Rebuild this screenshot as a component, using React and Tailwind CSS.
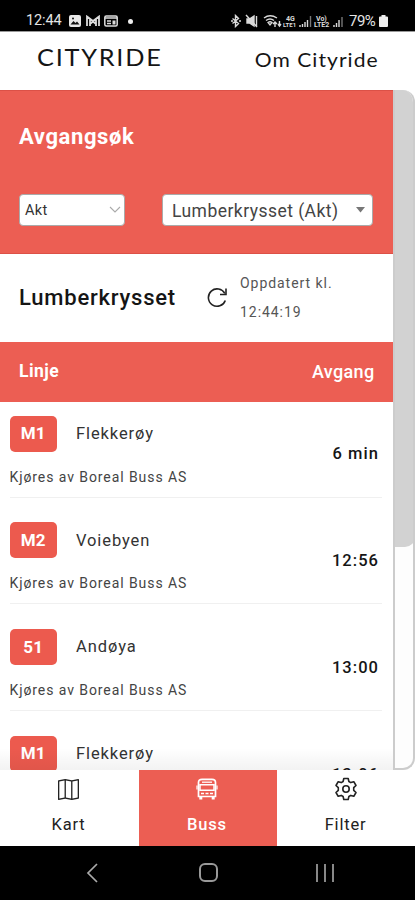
import React from "react";
import { BsMap } from "react-icons/bs";

const departures = [
  { line: "M1", to: "Flekkerøy", time: "6 min" },
  { line: "M2", to: "Voiebyen", time: "12:56" },
  { line: "51", to: "Andøya", time: "13:00" },
  { line: "M1", to: "Flekkerøy", time: "13:06" },
];

function ReloadIcon() {
  return (
    <svg width="21" height="21" viewBox="0 0 21 21" fill="none" stroke="#222" strokeWidth="1.600" className="shrink-0">
      <path d="M18.300 13.500A8.700 8.700 0 1 1 17.800 6.500" />
      <path d="M19 1.500V7.500H13" />
    </svg>
  );
}

function BusIcon() {
  return (
    <svg width="22" height="22" viewBox="0 0 22 22" fill="none" stroke="#fff" strokeWidth="1.700">
      <path d="M2.500 18.500V4.500Q2.500 1.300 6 1.300H16Q19.500 1.300 19.500 4.500V18.500z" />
      <path d="M6 4.200h10" strokeWidth="1.300" />
      <path d="M4 6.800h14v5.500H4z" strokeWidth="1.500" />
      <path d="M1 7.500v4M21 7.500v4" strokeWidth="1.200" />
      <path d="M5 15.500h3M14 15.500h3M9.500 15.500h3" />
      <path d="M4.800 18v3.500M17.200 18v3.500" strokeWidth="3" />
    </svg>
  );
}

function GearIcon() {
  return (
    <svg width="24" height="24" viewBox="0 0 24 24" fill="none" stroke="#222" strokeWidth="1.600" strokeLinejoin="round">
      <path d="M9.800 1.500h4.400l.7 3 1.900 1.100 3-.9 2.200 3.800-2.300 2.200v2.600l2.300 2.200-2.200 3.800-3-.9-1.900 1.100-.7 3H9.800l-.7-3-1.900-1.100-3 .9L2 15.500l2.300-2.200v-2.600L2 8.500l2.200-3.800 3 .9 1.900-1.100z" />
      <circle cx="12" cy="12" r="3.200" />
    </svg>
  );
}

function StatusBar() {
  return (
    <div className="flex h-[31px] shrink-0 items-center bg-black pt-[11px] pl-[26px] text-[#e4e4e4]">
      <span className="w-[43px] text-[14.500px] leading-[18px] tracking-[-0.1px] whitespace-nowrap">12:44</span>
      <svg width="12" height="12" viewBox="0 0 12 12" className="shrink-0">
        <rect width="12" height="12" rx="2" fill="#e8e8e8" />
        <path d="M1.500 9.500 4.500 6l2 2 1.500-1.500 2.500 3z" fill="#111" />
        <circle cx="4" cy="3.400" r="1" fill="#111" />
      </svg>
      <svg width="14" height="12" viewBox="0 0 14 12" className="ml-[5px] shrink-0" fill="none" stroke="#dcdcdc" strokeWidth="1.800">
        <path d="M1 11V1.500L7 6l6-4.500V11M4 11V4M10 11V4M4 9l3-2.500L10 9" />
      </svg>
      <svg width="14" height="12" viewBox="0 0 14 12" className="ml-[4px] shrink-0">
        <rect x=".8" y="1" width="12.400" height="10" rx="1.500" fill="none" stroke="#dcdcdc" strokeWidth="1.500" />
        <path d="M1 3h12M3 6h4M3 8.500h4" stroke="#dcdcdc" strokeWidth="1.500" />
        <path d="M8.500 5.500h3v4h-3z" fill="#dcdcdc" />
      </svg>
      <div className="ml-[10px] size-[5px] shrink-0 rounded-full bg-[#eee]" />
      <svg width="115" height="14" viewBox="0 0 115 14" className="ml-[97px] shrink-0" fill="none" stroke="#dadada" strokeWidth="1.400">
        <path d="M2.500 4.500l6 5-3 3V1.500l3 3-6 5M1 7h2M9 7h2" />
        <path d="M17 5h2.500L24 2v10l-4.500-3H17z" fill="#dadada" />
        <path d="M16 1l11 12M26.500 2v11" />
        <path d="M34 4q6-4.500 13 0M36 6.500q4-3 8 0M38 8.500q2-1.500 4 0l-2 2.500zM45 13V8m-2 2 2-2 2 2M49.500 7v5m-1.500-2 1.500 2 1.500-2" />
        <path d="M70 13v-2m2.500 2V10m2.500 3V8m2.500 5V6" />
        <path d="M80.500 13V2" stroke="#777" />
        <path d="M104 13v-2m2.500 2V9m2.500 4V6" />
        <path d="M112 13V3" stroke="#777" />
        <g fill="#dadada" stroke="none" fontFamily="Roboto, sans-serif" fontWeight="700">
          <text x="56" y="6.500" fontSize="7">4G</text>
          <text x="53" y="13" fontSize="6">LTE1</text>
          <text x="86" y="6.500" fontSize="7">Vo)</text>
          <text x="84" y="13" fontSize="7">LTE2</text>
        </g>
      </svg>
      <span className="ml-[4px] w-[29px] text-[15px] leading-[18px] tracking-[-0.5px] whitespace-nowrap">79%</span>
      <svg width="9" height="12" viewBox="0 0 9 12" className="ml-[1px] shrink-0" fill="#eee">
        <path d="M2.500 0h4v1.500H8A1 1 0 0 1 9 2.500V11a1 1 0 0 1-1 1H1a1 1 0 0 1-1-1V2.500a1 1 0 0 1 1-1h1.500z" />
      </svg>
    </div>
  );
}

function Departure({ line, to, time }) {
  return (
    <div className="mr-[11px] ml-[9.500px] flex h-[106.900px] shrink-0 pt-[14px]">
      <div className="flex h-[82px] grow justify-between border-b border-[#f0f0f0]">
        <div>
          <div className="flex h-9 items-center">
            <div className="flex h-9 w-[47.500px] items-center justify-center rounded-[5px] bg-[#ec5a4e] text-[17px] font-bold tracking-[0.300px] text-white">
              {line}
            </div>
            <span className="ml-[19px] pt-px text-[16.500px] tracking-[0.900px]">{to}</span>
          </div>
          <div className="mt-[15px] text-[14px] leading-[20px] tracking-[0.920px] whitespace-nowrap text-[#444]">Kjøres av Boreal Buss AS</div>
        </div>
        <span className="mt-[26.500px] mr-[2.500px] text-[16.500px] leading-6 font-medium tracking-[1.050px] text-[#151515]">{time}</span>
      </div>
    </div>
  );
}

export default function App() {
  return (
    <div className="flex h-[900px] w-[415px] flex-col overflow-hidden bg-white font-['Roboto',sans-serif] text-[#333]">
      <StatusBar />
      <header className="flex h-[59px] shrink-0 items-start justify-between border-t border-[#999] pr-[36px] pl-[37px] font-['Lato',sans-serif] whitespace-nowrap text-[#151515]">
        <span className="origin-left scale-x-[1.100] pt-[10px] text-[23px] leading-[30px] tracking-[1.600px]">CITYRIDE</span>
        <span className="origin-right scale-x-[1.080] pt-[14px] text-[19.500px] leading-[28px] tracking-[0.950px]">Om Cityride</span>
      </header>

      <div className="flex h-[680px] shrink-0 overflow-hidden">
        <main className="relative flex w-[392.500px] shrink-0 flex-col overflow-hidden">
          <section className="h-[163.500px] shrink-0 border-y border-[#dc5147] bg-[#ec5e53] pr-[19.500px] pl-[19px]">
            <h1 className="pt-[31px] text-[22px] leading-[30px] font-bold tracking-[0.600px] text-white">Avgangsøk</h1>
            <div className="mt-[42px] flex justify-between">
              <div className="flex h-[32px] w-[106px] items-center justify-between rounded-[4px] border border-[#aaa] bg-white pr-[3px] pl-[5px] text-[14.500px] tracking-[0.400px]">
                <span className="pt-px">Akt</span>
                <svg width="12" height="8" viewBox="0 0 12 8" fill="none" stroke="#aaa" strokeWidth="1.100"><path d="m1 1 5 5 5-5" /></svg>
              </div>
              <div className="flex h-[32px] w-[211.500px] items-center justify-between rounded-[4px] border border-[#aaa] bg-white pr-[7px] pl-[9.500px] text-[17.500px] tracking-[0.460px] whitespace-nowrap text-[#444]">
                <span className="pt-[2px]">Lumberkrysset (Akt)</span>
                <svg width="9" height="6" viewBox="0 0 9 6"><path d="M0 0h9L4.500 5.500z" fill="#777" /></svg>
              </div>
            </div>
          </section>

          <section className="flex h-[88px] shrink-0 items-center pl-[19px]">
            <h2 className="w-[188px] text-[22px] font-medium tracking-[0.780px] text-[#151515]">Lumberkrysset</h2>
            <ReloadIcon />
            <p className="ml-[12px] text-[14px] leading-[29px] tracking-[0.950px] whitespace-nowrap text-[#555]">
              Oppdatert kl.<br />12:44:19
            </p>
          </section>

          <div className="flex h-[60px] shrink-0 items-center justify-between bg-[#ec5e53] pr-[18px] pl-[19px] text-white">
            <span className="text-[17.500px] font-bold tracking-[0.450px]">Linje</span>
            <span className="text-[18px] font-medium tracking-[0.350px]">Avgang</span>
          </div>

          {departures.map((d, i) => <Departure key={i} {...d} />)}
          <div className="pointer-events-none absolute inset-x-0 bottom-0 h-[22px] bg-linear-to-b from-transparent to-black/5" />
        </main>
        <div className="w-[22.500px] shrink-0 overflow-hidden rounded-r-[12px] border-r-2 border-b-2 border-l-2 border-[#ccc] bg-[#fdfdfd]">
          <div className="-mx-[2px] h-[457px] rounded-br-[10px] bg-[#d2d2d2]" />
        </div>
      </div>

      <nav className="flex h-[76px] shrink-0 text-[16.500px] tracking-[0.800px] text-[#222]">
        <div className="flex w-[139px] flex-col items-center pt-[8px] pr-[2px]">
          <div className="flex h-[22px] items-center"><BsMap size={21} /></div>
          <span className="mt-[13px] leading-6">Kart</span>
        </div>
        <div className="flex w-[138px] flex-col items-center bg-[#ec5e53] pt-[8px] pr-[2px] text-white">
          <BusIcon />
          <span className="mt-[13px] leading-6 font-medium">Buss</span>
        </div>
        <div className="flex w-[138px] flex-col items-center pt-[7px] pr-[1px]">
          <GearIcon />
          <span className="mt-[12px] leading-6">Filter</span>
        </div>
      </nav>

      <div className="flex h-[54px] shrink-0 items-start bg-black pt-[17px] pl-[86px]">
        <svg width="12" height="20" viewBox="0 0 12 20" fill="none" stroke="#aaa" strokeWidth="1.700"><path d="M11 1 2 10l9 9" /></svg>
        <div className="ml-[101px] h-[19px] w-[19px] rounded-[6px] border-2 border-[#999]" />
        <div className="mt-px ml-[98px] flex gap-[6px]">
          <div className="h-[18px] w-[2px] bg-[#888]" />
          <div className="h-[18px] w-[2px] bg-[#888]" />
          <div className="h-[18px] w-[2px] bg-[#888]" />
        </div>
      </div>
    </div>
  );
}
